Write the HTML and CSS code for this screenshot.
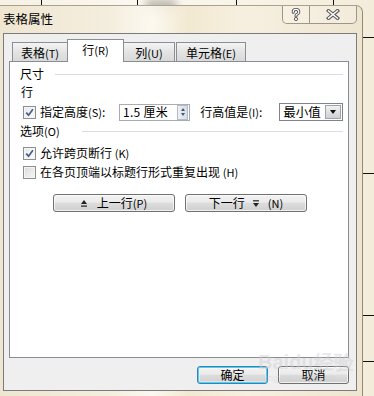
FILE: index.html
```html
<!DOCTYPE html>
<html lang="zh">
<head>
<meta charset="utf-8">
<title>表格属性</title>
<link rel="stylesheet" href="styles.css">
</head>
<body>
<div class="screen">
  <div class="blur-text"></div>
  <div class="dialog">
    <div class="titlebar">
      <span class="title">表格属性</span>
      <div class="caption-btns">
        <span class="cbtn help">
          <svg width="10" height="13" viewBox="0 0 10 13"><path d="M2.2 4.2 Q2.2 1.4 5 1.4 Q7.8 1.4 7.8 4 Q7.8 5.6 5.6 6.6 Q5 6.9 5 8" fill="none" stroke="#5a5a5a" stroke-width="3" stroke-linecap="round"/><path d="M2.2 4.2 Q2.2 1.4 5 1.4 Q7.8 1.4 7.8 4 Q7.8 5.6 5.6 6.6 Q5 6.9 5 8" fill="none" stroke="#fff" stroke-width="1.1" stroke-linecap="round"/><circle cx="5" cy="11" r="1.6" fill="#fff" stroke="#5a5a5a" stroke-width="1"/></svg>
        </span>
        <span class="cbtn close">
          <svg width="14" height="11" viewBox="0 0 14 11"><path d="M2.5 1.8 L11.5 9.2 M11.5 1.8 L2.5 9.2" stroke="#5a5a5a" stroke-width="3.6" stroke-linecap="square"/><path d="M2.5 1.8 L11.5 9.2 M11.5 1.8 L2.5 9.2" stroke="#fff" stroke-width="1.4" stroke-linecap="square"/></svg>
        </span>
      </div>
    </div>
    <div class="client">
      <div class="tabs">
        <div class="tab t1">表格<span class="acc">(T)</span></div>
        <div class="tab t2 active">行<span class="acc">(R)</span></div>
        <div class="tab t3">列<span class="acc">(U)</span></div>
        <div class="tab t4">单元格<span class="acc">(E)</span></div>
      </div>
      <div class="panel">
        <div class="group g1"><span class="glabel w1">尺寸</span><span class="rule"></span></div>
        <div class="sub">行</div>
        <div class="row size-row">
          <span class="check checked"><svg width="9" height="9" viewBox="0 0 9 9"><path d="M1.2 4.6 L3.6 7.2 L7.9 1.3" fill="none" stroke="#4b5d85" stroke-width="1.7"/></svg></span>
          <span class="lbl w-spec">指定高度<span class="acc">(S)</span>:</span>
          <span class="spin"><span class="spin-text">1.5 厘米</span><span class="spin-btn"><i class="up"></i><i class="dn"></i></span></span>
          <span class="lbl w-rule">行高值是<span class="acc">(I)</span>:</span>
          <span class="select"><span class="sel-text">最小值</span><span class="sel-btn"><i></i></span></span>
        </div>
        <div class="group g2"><span class="glabel w2">选项<span class="acc">(O)</span></span><span class="rule"></span></div>
        <div class="row chk-row r1">
          <span class="check checked"><svg width="9" height="9" viewBox="0 0 9 9"><path d="M1.2 4.6 L3.6 7.2 L7.9 1.3" fill="none" stroke="#4b5d85" stroke-width="1.7"/></svg></span>
          <span class="lbl">允许跨页断行 <span class="acc">(K)</span></span>
        </div>
        <div class="row chk-row r2">
          <span class="check"></span>
          <span class="lbl">在各页顶端以标题行形式重复出现 <span class="acc">(H)</span></span>
        </div>
        <div class="nav-row">
          <button class="btn nav"><svg class="arr" width="6" height="7" viewBox="0 0 6 7"><path d="M3 0 L6 4 L0 4 Z" fill="#222"/><rect x="0" y="5.5" width="6" height="1.2" fill="#222"/></svg><span class="bt">上一行<span class="acc">(P)</span></span></button>
          <button class="btn nav"><span class="bt">下一行</span><svg class="arr arr2" width="6" height="7" viewBox="0 0 6 7"><rect x="0" y="0.2" width="6" height="1.2" fill="#222"/><path d="M0 3 L6 3 L3 7 Z" fill="#222"/></svg><span class="acc">(N)</span></button>
        </div>
      </div>
      <div class="footer">
        <button class="btn ok">确定</button>
        <button class="btn cancel">取消</button>
      </div>
      <div class="watermark">Bai<span class="wm-du">du</span>经验<span class="wm-url">jingyan.baidu.com</span></div>
    </div>
  </div>
</div>
</body>
</html>
```

FILE: styles.css
```css
* { box-sizing: border-box; }
html, body { margin: 0; padding: 0; }
body {
  font-family: "Noto Sans CJK SC", "Noto Sans", sans-serif;
  font-size: 12px;
  color: #000;
  width: 374px;
  height: 396px;
  overflow: hidden;
}
.screen {
  position: relative;
  width: 374px;
  height: 396px;
  padding-top: 5px;
  overflow: hidden;
  background-color: #f6f2e6;
  background-image:
    linear-gradient(#111, #111), linear-gradient(#111, #111),
    linear-gradient(#111, #111), linear-gradient(#111, #111),
    linear-gradient(#111, #111), linear-gradient(#111, #111),
    linear-gradient(#111, #111), linear-gradient(#111, #111),
    linear-gradient(90deg, #f6f1e4, #fbf8f0 40%, #f3ecdb 100%);
  background-size:
    1px 6px, 1px 6px, 1px 6px, 1px 6px,
    12px 1px, 12px 1px, 12px 1px, 12px 1px,
    100% 100%;
  background-position:
    41px 0, 137px 0, 236px 0, 333px 0,
    363px 37px, 363px 173px, 363px 315px, 363px 361px,
    0 0;
  background-repeat: no-repeat;
}
.blur-text {
  position: absolute;
  left: 146px;
  top: 0;
  width: 30px;
  height: 12px;
  background: rgba(60, 55, 45, 0.35);
  filter: blur(4px);
}
.dialog {
  position: relative;
  width: 363px;
  height: 391px;
  border-top: 1px solid rgba(110, 100, 80, 0.55);
  border-right: 1px solid rgba(110, 100, 80, 0.7);
  border-top-right-radius: 7px;
  background: linear-gradient(90deg,
    rgba(238, 229, 208, 0.92) 0,
    rgba(243, 236, 220, 0.92) 30%,
    rgba(251, 248, 240, 0.92) 42%,
    rgba(241, 231, 206, 0.92) 52%,
    rgba(246, 239, 224, 0.92) 68%,
    rgba(237, 228, 206, 0.92) 100%);
}
.titlebar {
  display: flex;
  align-items: flex-start;
  height: 27px;
}
.title {
  padding: 6px 0 0 3px;
  line-height: 14px;
  font-size: 12.5px;
  color: #000;
}
.caption-btns {
  display: flex;
  margin-left: auto;
  margin-right: 5px;
  height: 18px;
  border: 1px solid rgba(100, 92, 75, 0.6);
  border-top: none;
  border-radius: 0 0 5px 5px;
  background: rgba(255, 255, 255, 0.25);
}
.cbtn {
  display: flex;
  align-items: center;
  justify-content: center;
  height: 100%;
}
.help { width: 27px; border-right: 1px solid rgba(100, 92, 75, 0.6); }
.close { width: 46px; }
.client {
  position: relative;
  margin-left: 3px;
  width: 354px;
  height: 358px;
  border: 1px solid #7b7b7b;
  background: #f0eff0;
  padding: 5px 7px 0 5px;
}
.acc { font-size: 11px; letter-spacing: 0; }
.tabs {
  display: flex;
  align-items: flex-start;
  height: 22px;
  padding-left: 3px;
}
.tab {
  height: 19px;
  margin-top: 3px;
  border: 1px solid #8c8e94;
  border-bottom: none;
  background: linear-gradient(#f4f4f4, #e3e3e3 50%, #d9d9d9);
  display: flex;
  align-items: center;
  justify-content: center;
  line-height: 14px;
  padding-top: 1px;
}
.t1 { width: 55px; border-right: none; }
.t2 { width: 57px; }
.t3 { width: 51px; border-left: none; }
.t4 { width: 70px; margin-left: 1px; }
.tab.active {
  position: relative;
  z-index: 1;
  height: 23px;
  margin-top: 0;
  background: #fff;
  padding-top: 0;
  padding-bottom: 2px;
}
.panel {
  height: 297px;
  background: #fff;
  border: 1px solid #898c95;
  padding: 0 5px 0 5px;
}
.group {
  display: flex;
  align-items: center;
  height: 14px;
  line-height: 14px;
}
.g1 { margin-top: 5px; }
.g2 { margin-top: 3px; }
.glabel { padding-left: 5px; flex: none; }
.w1 { width: 40px; }
.w2 { width: 67px; }
.rule {
  flex: 1;
  height: 1px;
  background: #d9dde2;
}
.sub {
  margin-top: 4px;
  padding-left: 6px;
  line-height: 14px;
}
.row {
  display: flex;
  align-items: center;
  padding-left: 8px;
}
.size-row { margin-top: 4px; height: 18px; }
.check {
  flex: none;
  width: 13px;
  height: 13px;
  border: 1px solid #8f8f8f;
  background: linear-gradient(135deg, #dcdcdc, #f6f6f6);
  box-shadow: inset 0 0 0 1px #f4f4f4;
  display: flex;
  align-items: center;
  justify-content: center;
}
.check.checked { background: linear-gradient(135deg, #e6e9ee, #fbfbfb); }
.lbl {
  margin-left: 4px;
  line-height: 14px;
  white-space: nowrap;
}
.w-spec { width: 79px; flex: none; }
.w-rule { width: 79px; flex: none; margin-left: 10px; }
.spin {
  display: flex;
  align-items: center;
  width: 74px;
  height: 17px;
  border: 1px solid #a5acb5;
  border-top-color: #abadb3;
  background: #fff;
  padding-left: 3px;
}
.spin-text {
  flex: 1;
  line-height: 14px;
  font-family: "Noto Sans CJK SC", "DejaVu Sans", sans-serif;
  letter-spacing: 0.3px;
}
.spin-btn {
  flex: none;
  width: 11px;
  height: 15px;
  margin-right: 1px;
  border: 1px solid #b4bcc6;
  background: linear-gradient(90deg, #eef2f6, #d5dde6);
  display: flex;
  flex-direction: column;
  align-items: center;
  justify-content: center;
  gap: 2px;
}
.spin-btn i {
  width: 0;
  height: 0;
  border-left: 2.5px solid transparent;
  border-right: 2.5px solid transparent;
}
.spin-btn .up { border-bottom: 3px solid #4a5570; }
.spin-btn .dn { border-top: 3px solid #4a5570; }
.select {
  display: flex;
  align-items: center;
  width: 66px;
  height: 18px;
  border: 1px solid #7f838c;
  background: #fff;
  padding-left: 3px;
}
.sel-text { flex: 1; line-height: 14px; font-size: 12.5px; }
.sel-btn {
  flex: none;
  width: 16px;
  height: 14px;
  margin-right: 1px;
  border: 1px solid #9fa4ac;
  background: linear-gradient(#f2f2f2, #cfd0d2);
  display: flex;
  align-items: center;
  justify-content: center;
}
.sel-btn i {
  width: 0;
  height: 0;
  border-left: 3.5px solid transparent;
  border-right: 3.5px solid transparent;
  border-top: 4px solid #111;
}
.chk-row { height: 14px; }
.r1 { margin-top: 8px; }
.r2 { margin-top: 5px; }
.nav-row {
  display: flex;
  gap: 10px;
  margin-top: 15px;
  padding-left: 38px;
}
.btn {
  font-family: inherit;
  font-size: 12px;
  color: #000;
  margin: 0;
  padding: 0;
  height: 18px;
  border: 1px solid #707070;
  border-radius: 3px;
  background: linear-gradient(#f2f2f2 0, #ebebeb 45%, #dddddd 50%, #cfcfcf 100%);
  box-shadow: inset 0 0 0 1px rgba(255, 255, 255, 0.7);
  display: flex;
  align-items: center;
  justify-content: center;
  line-height: 14px;
}
.nav { width: 122px; }
.arr { margin-right: 10px; }
.arr2 { margin: 0 9px 0 8px; }
.footer {
  display: flex;
  justify-content: flex-end;
  gap: 10px;
  padding-top: 8px;
}
.ok, .cancel { width: 71px; }
.ok {
  border-color: #3c7fb1;
  box-shadow: inset 0 0 0 1px #48d0f5, inset 0 0 0 2px rgba(255,255,255,0.4);
  background: linear-gradient(#eaf6fd 0, #d9f0fc 45%, #bee6fd 50%, #a7d9f5 100%);
  background: linear-gradient(#f2f2f2 0, #ebebeb 45%, #dddddd 50%, #cfcfcf 100%);
}
.watermark {
  position: absolute;
  left: 254px;
  top: 318px;
  font-family: "Liberation Sans", sans-serif;
  font-size: 20px;
  font-weight: bold;
  line-height: 20px;
  color: rgba(205, 205, 210, 0.45);
  white-space: nowrap;
  pointer-events: none;
}
.wm-du { font-size: 20px; }
.wm-url {
  position: absolute;
  left: 6px;
  top: 21px;
  font-size: 9px;
  font-weight: normal;
  line-height: 10px;
}
```
